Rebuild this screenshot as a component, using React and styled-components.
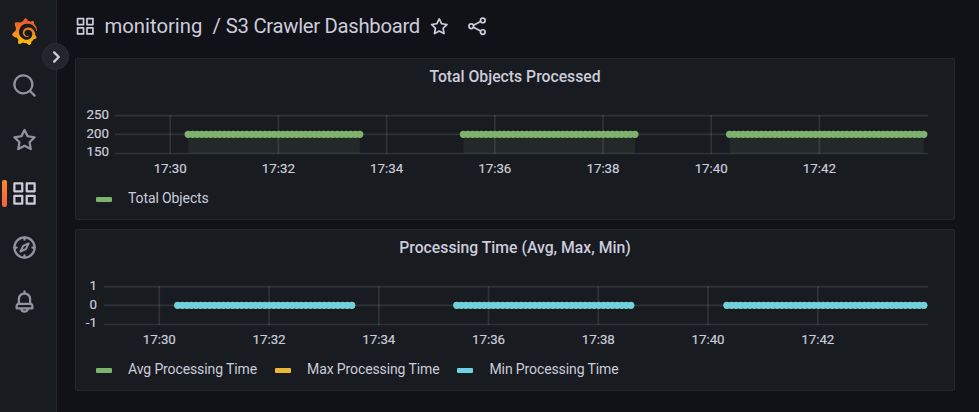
import React from "react";
import styled, { createGlobalStyle } from "styled-components";
import { SiGrafana } from "react-icons/si";

const GlobalStyle = createGlobalStyle`
  * { box-sizing: border-box; }
  body {
    margin: 0;
    overflow: hidden;
    background: #111217;
    color: #ccccdc;
    font-family: Roboto, "Liberation Sans", sans-serif;
  }
`;

const Page = styled.div`
  display: flex;
  height: 412px;
  background: #111217;
`;

const Sidebar = styled.nav`
  position: relative;
  width: 57px;
  flex: none;
  display: flex;
  flex-direction: column;
  padding-top: 4px;
  background: #181b1f;
  border-right: 1px solid #25272c;
`;

const NavItem = styled.a`
  position: relative;
  display: flex;
  align-items: center;
  height: 54px;
  padding-left: 11px;
  color: ${(p) => (p.$active ? "#ccccdc" : "#92939e")};

  &::before {
    content: "";
    display: ${(p) => (p.$active ? "block" : "none")};
    position: absolute;
    left: 2px;
    top: 14px;
    width: 5px;
    height: 27px;
    border-radius: 2px;
    background: linear-gradient(#ff8833, #f55f3e);
  }
`;

const Logo = styled(SiGrafana)`
  width: 27px;
  height: 27px;
  path { fill: url(#logo-gradient); }
`;

const Toggle = styled.button`
  position: absolute;
  left: 42px;
  top: 43px;
  width: 27px;
  height: 27px;
  padding: 0;
  display: flex;
  align-items: center;
  justify-content: center;
  border: 1px solid #2c2e34;
  border-radius: 50%;
  background: #22252b;
  color: #ccccdc;
`;

const Main = styled.main`
  flex: 1;
  min-width: 0;
  padding: 0 24px 0 18px;
`;

const Header = styled.header`
  display: flex;
  align-items: center;
  height: 58px;
  padding: 0 0 6px;
`;

const Title = styled.h1`
  display: flex;
  margin: 0 9px;
  font-size: 20.3px;
  font-weight: 400;
  line-height: 24px;
  white-space: pre;
`;

const DashboardName = styled.span`
  letter-spacing: -0.3px;
`;

const HeaderAction = styled.span`
  display: flex;
  margin-right: 17.5px;
`;

const Panel = styled.section`
  display: flex;
  flex-direction: column;
  height: 162px;
  margin-bottom: 9px;
  border: 1px solid #25272c;
  border-radius: 2px;
  background: #181b1f;
`;

const PanelTitle = styled.h2`
  margin: 0;
  height: 36px;
  text-align: center;
  font-size: 15.75px;
  font-weight: 500;
  line-height: 36px;
`;

const Plot = styled.svg`
  display: block;
  width: 878px;
  height: 88px;
  overflow: visible;
`;

const AxisText = styled.text`
  fill: #ccccdc;
  stroke: #ccccdc;
  stroke-width: 0.2px;
  font-size: 13.3px;
`;

const Legend = styled.div`
  display: flex;
  gap: 18px;
  padding-left: 20px;
`;

const LegendItem = styled.div`
  display: flex;
  align-items: center;
  gap: 16px;
  height: 30px;
  font-size: 14px;
  letter-spacing: -0.11px;
  white-space: nowrap;
`;

const Swatch = styled.span`
  width: 16px;
  height: 5px;
  margin-top: 2px;
  border-radius: 1px;
  background: ${(p) => p.$color};
`;

const ICONS = {
  apps: "M10,13H3a1,1,0,0,0-1,1v7a1,1,0,0,0,1,1h7a1,1,0,0,0,1-1V14A1,1,0,0,0,10,13ZM9,20H4V15H9ZM21,2H14a1,1,0,0,0-1,1v7a1,1,0,0,0,1,1h7a1,1,0,0,0,1-1V3A1,1,0,0,0,21,2ZM20,9H15V4h5Zm1,4H14a1,1,0,0,0-1,1v7a1,1,0,0,0,1,1h7a1,1,0,0,0,1-1V14A1,1,0,0,0,21,13Zm-1,7H15V15h5ZM10,2H3A1,1,0,0,0,2,3v7a1,1,0,0,0,1,1h7a1,1,0,0,0,1-1V3A1,1,0,0,0,10,2ZM9,9H4V4H9Z",
  search: "M21.71,20.29,18,16.61A9,9,0,1,0,16.61,18l3.68,3.68a1,1,0,0,0,1.42,0A1,1,0,0,0,21.71,20.29ZM11,18a7,7,0,1,1,7-7A7,7,0,0,1,11,18Z",
  star: "M22,9.67A1,1,0,0,0,21.14,9l-5.69-.83L12.9,3a1,1,0,0,0-1.8,0L8.55,8.16,2.86,9a1,1,0,0,0-.81.68,1,1,0,0,0,.25,1l4.13,4-1,5.68A1,1,0,0,0,6.9,21.44L12,18.77l5.1,2.67a.93.93,0,0,0,.46.12,1,1,0,0,0,.59-.19,1,1,0,0,0,.4-1l-1-5.68,4.13-4A1,1,0,0,0,22,9.67Zm-6.15,4a1,1,0,0,0-.29.88l.72,4.2-3.76-2a1.06,1.06,0,0,0-.94,0l-3.76,2,.72-4.2a1,1,0,0,0-.29-.88l-3-3,4.21-.61a1,1,0,0,0,.76-.55L12,5.7l1.88,3.82a1,1,0,0,0,.76.55l4.21.61Z",
  bell: "M18,13.18V10a6,6,0,0,0-5-5.91V3a1,1,0,0,0-2,0V4.09A6,6,0,0,0,6,10v3.18A3,3,0,0,0,4,16v2a1,1,0,0,0,1,1H8.14a4,4,0,0,0,7.72,0H19a1,1,0,0,0,1-1V16A3,3,0,0,0,18,13.18ZM8,10a4,4,0,0,1,8,0v3H8Zm4,10a2,2,0,0,1-1.72-1h3.44A2,2,0,0,1,12,20Zm6-3H6V16a1,1,0,0,1,1-1H17a1,1,0,0,1,1,1Z",
};

const Icon = ({ name, size = 27 }) => (
  <svg width={size} height={size} viewBox="0 0 24 24" fill="currentColor">
    <path d={ICONS[name]} />
  </svg>
);

const StrokeIcon = ({ size = 27, width = 2, children }) => (
  <svg
    width={size}
    height={size}
    viewBox="0 0 24 24"
    fill="none"
    stroke="currentColor"
    strokeWidth={width}
    strokeLinecap="round"
    strokeLinejoin="round"
  >
    {children}
  </svg>
);

const GREEN = "#7eb26d";
const YELLOW = "#eab839";
const CYAN = "#6ed0e0";

const PANELS = [
  {
    title: "Total Objects Processed",
    left: 39,
    labelX: 33,
    labels: ["250", "200", "150"],
    firstTick: 94.2,
    tickGap: 108.2,
    runs: [[112.2, 39], [387.4, 39], [653.6, 44]],
    step: 4.515,
    layers: [GREEN],
    filled: true,
    legend: [["Total Objects", GREEN]],
  },
  {
    title: "Processing Time (Avg, Max, Min)",
    left: 28,
    labelX: 21,
    labels: ["1", "0", "-1"],
    firstTick: 83.3,
    tickGap: 109.75,
    runs: [[101.7, 39], [380.8, 39], [650.9, 44]],
    step: 4.58,
    layers: [GREEN, CYAN],
    filled: false,
    legend: [
      ["Avg Processing Time", GREEN],
      ["Max Processing Time", YELLOW],
      ["Min Processing Time", CYAN],
    ],
  },
];

const TIMES = ["17:30", "17:32", "17:34", "17:36", "17:38", "17:40", "17:42"];
const LINES = [20.7, 39.3, 58.5];
const LABEL_BASELINES = [24, 43, 61];

const Chart = ({ data }) => (
  <Plot viewBox="0 0 878 88">
    <g stroke="#f0faff" strokeOpacity="0.11" strokeWidth="1.7">
      {LINES.map((y) => (
        <line key={y} x1={data.left} x2="852" y1={y} y2={y} />
      ))}
      {TIMES.map((time, i) => {
        const x = data.firstTick + i * data.tickGap;
        return <line key={time} x1={x} x2={x} y1="20" y2="59" />;
      })}
    </g>
    {data.labels.map((label, i) => (
      <AxisText key={label} x={data.labelX} y={LABEL_BASELINES[i]} textAnchor="end">
        {label}
      </AxisText>
    ))}
    {TIMES.map((time, i) => (
      <AxisText key={time} x={data.firstTick + i * data.tickGap} y="78" textAnchor="middle">
        {time}
      </AxisText>
    ))}
    {data.runs.map(([start, count]) => {
      const end = start + (count - 1) * data.step;
      return (
        <g key={start}>
          {data.filled && (
            <rect x={start} y="39.5" width={end - start} height="19" fill="#a0b688" fillOpacity="0.09" />
          )}
          {data.layers.map((color, layer) => (
            <g key={color} fill={color}>
              {Array.from({ length: count }, (_, i) => (
                <circle key={i} cx={start + i * data.step} cy="39.3" r={layer ? 3.4 : 3.6} />
              ))}
            </g>
          ))}
        </g>
      );
    })}
  </Plot>
);

const LogoGradient = () => (
  <svg width="0" height="0" aria-hidden="true">
    <linearGradient id="logo-gradient" x1="0" y1="0" x2="0" y2="1">
      <stop offset="0.1" stopColor="#f05a28" />
      <stop offset="0.5" stopColor="#f58220" />
      <stop offset="1" stopColor="#fcca0a" />
    </linearGradient>
  </svg>
);

export default function App() {
  return (
    <Page>
      <GlobalStyle />
      <Sidebar>
        <NavItem>
          <Logo />
          <LogoGradient />
        </NavItem>
        <NavItem><Icon name="search" /></NavItem>
        <NavItem><Icon name="star" /></NavItem>
        <NavItem $active><Icon name="apps" /></NavItem>
        <NavItem>
          <StrokeIcon>
            <circle cx="12" cy="12" r="9" />
            <path d="M15.6 8.4l-4.8 2.2-2.4 5 4.9-2.3z" strokeWidth="1.8" />
            <path d="M12 3v2M12 19v2M3 12h2M19 12h2" />
          </StrokeIcon>
        </NavItem>
        <NavItem><Icon name="bell" /></NavItem>
        <Toggle aria-label="Expand menu">
          <StrokeIcon size={22} width={2.6}>
            <path d="M10 7l5 5-5 5" />
          </StrokeIcon>
        </Toggle>
      </Sidebar>
      <Main>
        <Header>
          <Icon name="apps" size={20.5} />
          <Title>
            <span>monitoring</span>
            <span>{"  / "}</span>
            <DashboardName>S3 Crawler Dashboard</DashboardName>
          </Title>
          <HeaderAction><Icon name="star" size={20.5} /></HeaderAction>
          <HeaderAction>
            <StrokeIcon size={20.5}>
              <circle cx="5" cy="12" r="2.7" />
              <circle cx="18.5" cy="5.2" r="2.7" />
              <circle cx="18.5" cy="18.8" r="2.7" />
              <path d="M7.6 10.7l8.3-4.2M7.6 13.3l8.3 4.2" />
            </StrokeIcon>
          </HeaderAction>
        </Header>
        {PANELS.map((panel) => (
          <Panel key={panel.title}>
            <PanelTitle>{panel.title}</PanelTitle>
            <Chart data={panel} />
            <Legend>
              {panel.legend.map(([label, color]) => (
                <LegendItem key={label}>
                  <Swatch $color={color} />
                  {label}
                </LegendItem>
              ))}
            </Legend>
          </Panel>
        ))}
      </Main>
    </Page>
  );
}
